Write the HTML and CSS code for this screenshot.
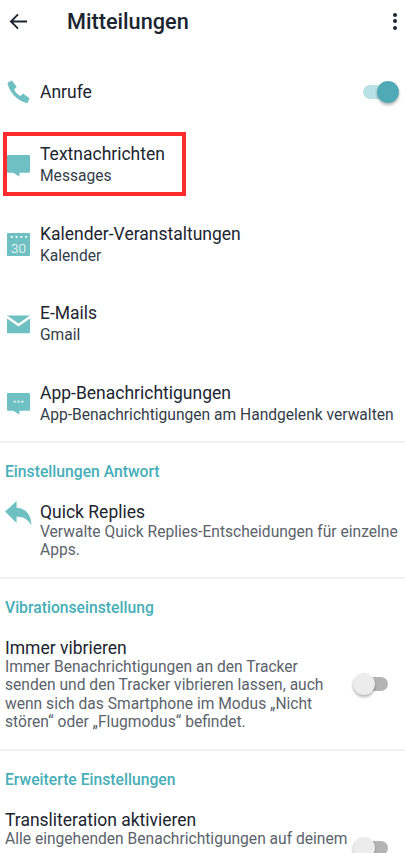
FILE: index.html
```html
<!DOCTYPE html>
<html lang="de">
<head>
  <meta charset="UTF-8" />
  <meta name="viewport" content="width=device-width, initial-scale=1.0" />
  <link rel="stylesheet" href="styles.css">
</head>
<body>
  <header class="topbar">
    <svg class="back-icon" viewBox="0 0 20 18"><path d="M19 9H2M9.500 1.500 2 9l7.500 7.500" fill="none" stroke="#1b2530" stroke-width="2"/></svg>
    <h1>Mitteilungen</h1>
    <div class="more"><span></span><span></span><span></span></div>
  </header>

  <section class="group-apps">
    <div class="row row-single">
      <svg class="row-icon" viewBox="0 0 24 24"><path fill="#6fc0c2" d="M1 2.600 5.200.4l5 7-2.700 2.600c1 2.600 3.500 5.400 6.700 6.700l2.500-2.500 6.800 4.900-1.900 4.300c-.3.500-.9.700-1.500.5C10.800 21.600 3.200 13.500.6 3.900.5 3.400.6 2.900 1 2.600z"/></svg>
      <div class="row-text"><div class="title">Anrufe</div></div>
      <div class="toggle toggle-on"><span class="track"></span><span class="knob"></span></div>
    </div>
    <div class="row">
      <svg class="row-icon" viewBox="0 0 24 24"><path fill="#6fc0c2" d="M1 1h22q1 0 1 1v16.500q0 1-1 1H13V23.500L6.500 19.500H1q-1 0-1-1V2q0-1 1-1z"/></svg>
      <div class="row-text">
        <div class="title">Textnachrichten</div>
        <div class="sub">Messages</div>
      </div>
      <div class="red-box"></div>
    </div>
    <div class="row">
      <svg class="row-icon" viewBox="0 0 24 24">
        <rect width="24" height="24" rx="1" fill="#6fc0c2"/>
        <path fill="#fff" d="M4 3h2v2H4zM9 3h2v2H9zM14 3h2v2h-2zM19 3h2v2h-2z"/>
        <text x="12" y="20.500" class="cal-text">30</text>
      </svg>
      <div class="row-text">
        <div class="title">Kalender-Veranstaltungen</div>
        <div class="sub">Kalender</div>
      </div>
    </div>
    <div class="row">
      <svg class="row-icon" viewBox="0 0 24 24">
        <path fill="#6fc0c2" d="M0 2.500h24V20q0 1-1 1H1q-1 0-1-1z"/>
        <path fill="none" stroke="#fff" stroke-width="2.400" d="M-1 3.500 12 12.500 25 3.500"/>
      </svg>
      <div class="row-text">
        <div class="title">E-Mails</div>
        <div class="sub">Gmail</div>
      </div>
    </div>
    <div class="row">
      <svg class="row-icon" viewBox="0 0 24 24">
        <path fill="#6fc0c2" d="M1 1h22q1 0 1 1v16.500q0 1-1 1H13V23.500L6.500 19.500H1q-1 0-1-1V2q0-1 1-1z"/>
        <path fill="#fff" d="M7 9h2v2H7zM11 9h2v2h-2zM15 9h2v2h-2z"/>
      </svg>
      <div class="row-text">
        <div class="title">App-Benachrichtigungen</div>
        <div class="sub">App-Benachrichtigungen am Handgelenk verwalten</div>
      </div>
    </div>
  </section>

  <section class="group group-reply">
    <h2>Einstellungen Antwort</h2>
    <div class="reply-row">
      <svg class="reply-icon" viewBox="0 0 28 26"><path fill="#6fc0c2" d="M0 11 12 0v7c9 .5 15 6 15.500 18.500C24 19 19 16.500 12 16.500V23z"/></svg>
      <div class="row-text">
        <div class="title">Quick Replies</div>
        <div class="sub sub-gray">Verwalte Quick Replies-Entscheidungen für einzelne Apps.</div>
      </div>
    </div>
  </section>

  <section class="group">
    <h2>Vibrationseinstellung</h2>
    <div class="switch-row">
      <div class="switch-text">
        <div class="title">Immer vibrieren</div>
        <div class="sub sub-gray">Immer Benachrichtigungen an den Tracker senden und den Tracker vibrieren lassen, auch wenn sich das Smartphone im Modus „Nicht stören“ oder „Flugmodus“ befindet.</div>
      </div>
      <div class="toggle toggle-off"><span class="track"></span><span class="knob"></span></div>
    </div>
  </section>

  <section class="group">
    <h2>Erweiterte Einstellungen</h2>
    <div class="switch-row switch-row-cut">
      <div class="switch-text">
        <div class="title">Transliteration aktivieren</div>
        <div class="sub sub-gray">Alle eingehenden Benachrichtigungen auf deinem</div>
      </div>
      <div class="toggle toggle-off"><span class="track"></span><span class="knob"></span></div>
    </div>
  </section>
</body>
</html>
```

FILE: styles.css
```css
html, body {
  margin: 0;
  padding: 0;
  height: 853px;
  overflow: hidden;
  background-color: #ffffff;
  font-family: Roboto, Arial, sans-serif;
  color: #1b2530;
}

.topbar {
  display: flex;
  align-items: center;
  height: 42px;
}

.back-icon {
  width: 19px;
  height: 17px;
  margin-left: 9px;
}

.topbar h1 {
  margin: 0 0 0 39px;
  font-size: 21.700px;
  font-weight: 500;
  flex: 1;
}

.more {
  display: flex;
  flex-direction: column;
  gap: 2.500px;
  margin-right: 8px;
}

.more span {
  width: 4px;
  height: 4px;
  border-radius: 50%;
  background-color: #1b2530;
}

.group-apps {
  padding-top: 16px;
}

.row {
  position: relative;
  display: flex;
  align-items: center;
  height: 79.500px;
  padding-left: 7px;
}

.row-single {
  height: 67.500px;
}

.row-icon {
  width: 23px;
  height: 23px;
  flex-shrink: 0;
}

.row-text {
  margin-left: 10px;
}

.title {
  font-size: 17.500px;
  line-height: 22px;
}

.sub {
  font-size: 15.600px;
  line-height: 22px;
  color: #333d48;
}

.sub-gray {
  line-height: 18.600px;
  color: #5b636b;
}

.cal-text {
  font-family: Roboto, Arial, sans-serif;
  font-size: 14px;
  font-weight: 300;
  fill: #ffffff;
  text-anchor: middle;
}

.red-box {
  position: absolute;
  left: 3px;
  top: 6px;
  width: 183px;
  height: 64px;
  box-sizing: border-box;
  border: 4px solid #fb2c2e;
}

.toggle {
  position: relative;
  flex-shrink: 0;
  width: 36px;
  height: 24px;
}

.row-single .toggle {
  margin-left: auto;
  margin-right: 6px;
}

.track {
  position: absolute;
  left: 0;
  right: 1px;
  top: 5px;
  height: 14px;
  border-radius: 7px;
}

.knob {
  position: absolute;
  top: 1px;
  width: 22px;
  height: 22px;
  border-radius: 50%;
  box-shadow: 0 2px 3px rgba(0, 0, 0, 0.3);
}

.toggle-on .track {
  background-color: #b9e2e6;
}

.toggle-on .knob {
  right: 0;
  background-color: #4faab6;
}

.toggle-off .track {
  background-color: #b4b4b4;
}

.toggle-off .knob {
  left: 0;
  background-color: #ececec;
}

.group {
  border-top: 2px solid #f1f1f1;
}

.group h2 {
  margin: 0;
  font-size: 15.700px;
  font-weight: 500;
  line-height: 20px;
  padding: 19px 0 0 5px;
  color: #46aeb8;
}

.group-reply {
  margin-top: -3px;
}

.reply-row {
  display: flex;
  padding: 19px 0 17px 5px;
}

.reply-icon {
  width: 27px;
  height: 25px;
  flex-shrink: 0;
}

.reply-row .row-text {
  margin-left: 8px;
}

.switch-row {
  display: flex;
  align-items: center;
  justify-content: space-between;
  padding: 19px 16px 17px 5px;
}

.switch-row .sub {
  margin-top: -1px;
}

.switch-text {
  width: 344px;
}

.switch-row-cut {
  align-items: flex-start;
}

.switch-row-cut .toggle {
  margin-top: 27px;
}
```
